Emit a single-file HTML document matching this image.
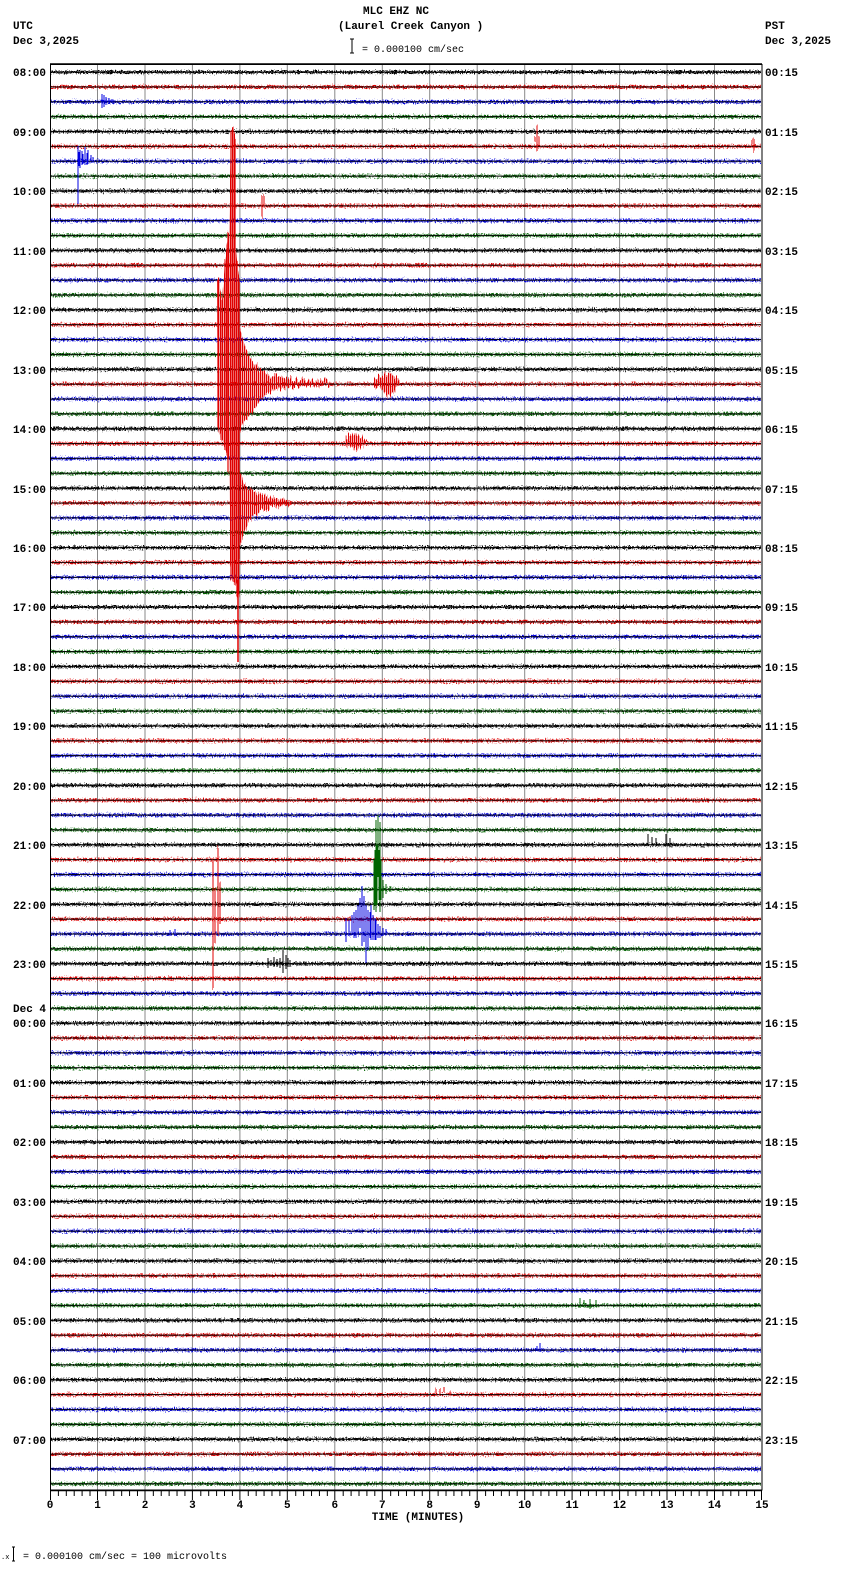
<!DOCTYPE html>
<html><head><meta charset="utf-8"><style>
html,body{margin:0;padding:0;background:#fff;}
body{width:850px;height:1584px;overflow:hidden;}
svg{display:block;}
text{font-family:"Liberation Mono","DejaVu Sans Mono",monospace;font-size:11px;font-weight:bold;fill:#000;}
.s{font-size:10px;font-weight:normal;}
</style></head><body>
<svg width="850" height="1584" viewBox="0 0 850 1584" xmlns="http://www.w3.org/2000/svg">
<defs>
<pattern id="tr" patternUnits="userSpaceOnUse" x="0" y="71" width="20" height="59.44">
<rect x="0" y="0" width="20" height="2.2" fill="#000"/>
<rect x="0" y="14.86" width="20" height="2.2" fill="#e00000"/>
<rect x="0" y="29.72" width="20" height="2.2" fill="#0000e0"/>
<rect x="0" y="44.58" width="20" height="2.2" fill="#006400"/>
</pattern>
<pattern id="bl" patternUnits="userSpaceOnUse" x="0" y="71" width="20" height="14.86">
<rect x="0" y="0.6" width="20" height="1" fill="#000"/>
</pattern>
<pattern id="rs" patternUnits="userSpaceOnUse" x="0" y="0" width="2" height="10">
<rect x="0" y="0" width="1.3" height="10" fill="#e00000"/>
</pattern>
<filter id="nz" x="0" y="0" width="1" height="1">
<feTurbulence type="fractalNoise" baseFrequency="0.9 0.6" numOctaves="2" seed="3" result="t"/>
<feColorMatrix in="t" type="matrix" values="0 0 0 0 0.5  0 1 0 0 0  0 0 0 0 0  0 0 0 0 1" result="m"/>
<feDisplacementMap in="SourceGraphic" in2="m" scale="7" xChannelSelector="R" yChannelSelector="G"/>
</filter>
<filter id="nz2" x="-0.1" y="-0.1" width="1.2" height="1.2">
<feTurbulence type="fractalNoise" baseFrequency="0.6 0.02" numOctaves="2" seed="7" result="t"/>
<feColorMatrix in="t" type="matrix" values="0 0 0 0 0.5  0 1 0 0 0  0 0 0 0 0  0 0 0 0 1" result="m"/>
<feDisplacementMap in="SourceGraphic" in2="m" scale="14" xChannelSelector="R" yChannelSelector="G"/>
</filter>
</defs>

<!-- header -->
<text x="363" y="14">MLC EHZ NC</text>
<text x="338" y="29">(Laurel Creek Canyon )</text>
<text x="13" y="29">UTC</text>
<text x="13" y="44">Dec 3,2025</text>
<text x="765" y="29">PST</text>
<text x="765" y="44">Dec 3,2025</text>
<path d="M350 39h4M352 39v14M350 53h4" stroke="#000" stroke-width="1" fill="none"/>
<text class="s" x="362" y="52">= 0.000100 cm/sec</text>

<!-- grid -->
<g stroke="#888" stroke-width="1">
<path d="M97.5 65V1490M145 65V1490M192.4 65V1490M239.9 65V1490M287.3 65V1490M334.8 65V1490M382.3 65V1490M429.7 65V1490M477.2 65V1490M524.7 65V1490M572.1 65V1490M619.6 65V1490M667 65V1490M714.5 65V1490"/>
</g>
<rect x="50.5" y="64.5" width="711.5" height="1425.5" fill="none" stroke="#000" stroke-width="1"/>
<path d="M50 64H762" stroke="#000" stroke-width="1.5"/>

<!-- traces -->
<g filter="url(#nz)">
<rect x="51" y="66" width="710" height="1423" fill="url(#tr)"/>
</g>
<rect x="51" y="66" width="710" height="1423" fill="url(#bl)"/>

<!-- events -->
<g fill="none" stroke="#0000e0" stroke-width="1">
<path d="M101 101h14M102 94v14M104 95v12M106 97v8M109 98v6M112 99v3"/>
<path d="M78 146v58M80 150v18M82 151v14M85 147v18M88 150v14M91 155v6M79 152v14M83 154v10M87 153v12M93 157v5"/>
<path d="M346 918v24M349 920v16M352 915v20M354 912v26M356 910v28M358 905v30M360 898v30M362 886v60M364 896v46M366 905v58M368 910v40M370 912v26M371 905v35M373 915v25M375 918v22M376 920v20M378 924v14M380 926v12M383 928v8M386 929v6M170 930v6M175 929v7"/>
<path d="M540 1343v9M537 1346v5"/>
</g>
<g filter="url(#nz2)">
<g fill="#e00000" stroke="#e00000" stroke-width="1">
<path d="M537 123v28M535 135v6M539 134v10M754 136v14M752 140v6M262 194v24M264 198v12" fill="none"/>
<polygon points="231,130 235,130 236,250 238,270 240,280 240,600 236,582 233,582 230,560 229,460 222,440 218,430 217,280 219,280 222,300 225,260 229,230" fill="url(#rs)" stroke="none"/>
<path d="M231 130V580M233 130V582M235 135V585M237 260V600M239 280V560M218 280V430M221 300V440M225 260V450M228 230V470" fill="none" stroke-width="1.2"/>
<polygon points="240,330 246,350 252,360 258,368 264,372 272,376 282,378 300,380 330,381 330,385 300,386 282,389 270,392 262,398 254,410 246,420 240,430" fill="url(#rs)" stroke="none"/>
<polygon points="240,470 244,484 252,490 260,494 270,497 290,500 292,505 270,507 258,512 250,520 244,535 240,545" fill="url(#rs)" stroke="none"/>
<polygon points="374,377 385,375 392,373 400,380 398,386 392,393 388,398 380,386 374,388" fill="url(#rs)" stroke="none"/>
<polygon points="345,437 356,433 362,438 368,441 362,446 356,450 350,446 345,444" fill="url(#rs)" stroke="none"/>
<path d="M213 860v84M215 888v54M218 845v88M220 882v40M213 920v70" fill="none"/>
<path d="M436 1390v6M440 1389v7M444 1390v5M450 1390v4" fill="none"/>
</g>
</g>
<path d="M238 580V662" stroke="#e00000" stroke-width="1.5"/>
<g fill="none" stroke="#006400" stroke-width="1">
<path d="M376 820v92M378 815v62M380 822v90M374 860v50M375 850v55M377 845v60M379 850v50M381 860v40M383 880v18M386 884v10M390 886v6"/>
<path d="M580 1298v10M584 1300v7M590 1299v10M596 1300v6"/>
</g>
<g fill="none" stroke="#000" stroke-width="1">
<path d="M268 958v10M271 960v6M274 957v10M277 959v8M280 958v10M283 950v23M286 955v14M288 958v9M290 960v7M296 961v4"/>
<path d="M648 834v12M652 837v8M656 838v5M666 834v12M670 838v6"/>
</g>

<!-- left labels -->
<g>
<text x="13" y="76">08:00</text>
<text x="13" y="136">09:00</text>
<text x="13" y="195">10:00</text>
<text x="13" y="255">11:00</text>
<text x="13" y="314">12:00</text>
<text x="13" y="374">13:00</text>
<text x="13" y="433">14:00</text>
<text x="13" y="493">15:00</text>
<text x="13" y="552">16:00</text>
<text x="13" y="611">17:00</text>
<text x="13" y="671">18:00</text>
<text x="13" y="730">19:00</text>
<text x="13" y="790">20:00</text>
<text x="13" y="849">21:00</text>
<text x="13" y="909">22:00</text>
<text x="13" y="968">23:00</text>
<text x="13" y="1012">Dec 4</text>
<text x="13" y="1027">00:00</text>
<text x="13" y="1087">01:00</text>
<text x="13" y="1146">02:00</text>
<text x="13" y="1206">03:00</text>
<text x="13" y="1265">04:00</text>
<text x="13" y="1325">05:00</text>
<text x="13" y="1384">06:00</text>
<text x="13" y="1444">07:00</text>
</g>
<g>
<text x="765" y="76">00:15</text>
<text x="765" y="136">01:15</text>
<text x="765" y="195">02:15</text>
<text x="765" y="255">03:15</text>
<text x="765" y="314">04:15</text>
<text x="765" y="374">05:15</text>
<text x="765" y="433">06:15</text>
<text x="765" y="493">07:15</text>
<text x="765" y="552">08:15</text>
<text x="765" y="611">09:15</text>
<text x="765" y="671">10:15</text>
<text x="765" y="730">11:15</text>
<text x="765" y="790">12:15</text>
<text x="765" y="849">13:15</text>
<text x="765" y="909">14:15</text>
<text x="765" y="968">15:15</text>
<text x="765" y="1027">16:15</text>
<text x="765" y="1087">17:15</text>
<text x="765" y="1146">18:15</text>
<text x="765" y="1206">19:15</text>
<text x="765" y="1265">20:15</text>
<text x="765" y="1325">21:15</text>
<text x="765" y="1384">22:15</text>
<text x="765" y="1444">23:15</text>
</g>

<!-- axis -->
<path d="M50 1490.5H762" stroke="#000" stroke-width="1.5"/>
<path d="M50.5 1490v10M97.5 1490v10M145 1490v10M192.4 1490v10M239.9 1490v10M287.3 1490v10M334.8 1490v10M382.3 1490v10M429.7 1490v10M477.2 1490v10M524.7 1490v10M572.1 1490v10M619.6 1490v10M667 1490v10M714.5 1490v10M761.5 1490v10" stroke="#000" stroke-width="1"/>
<g stroke="#000" stroke-width="1">
<path id="mt" d="M58.4 1490v6M66.3 1490v6M74.2 1490v6M82.1 1490v6M90 1490v6"/>
<use href="#mt" x="47.47"/><use href="#mt" x="94.93"/><use href="#mt" x="142.4"/><use href="#mt" x="189.87"/><use href="#mt" x="237.33"/><use href="#mt" x="284.8"/><use href="#mt" x="332.27"/><use href="#mt" x="379.73"/><use href="#mt" x="427.2"/><use href="#mt" x="474.67"/><use href="#mt" x="522.13"/><use href="#mt" x="569.6"/><use href="#mt" x="617.07"/><use href="#mt" x="664.53"/>
</g>
<g text-anchor="middle">
<text x="50" y="1508">0</text><text x="97.5" y="1508">1</text><text x="145" y="1508">2</text><text x="192.4" y="1508">3</text><text x="239.9" y="1508">4</text><text x="287.3" y="1508">5</text><text x="334.8" y="1508">6</text><text x="382.3" y="1508">7</text><text x="429.7" y="1508">8</text><text x="477.2" y="1508">9</text><text x="524.7" y="1508">10</text><text x="572.1" y="1508">11</text><text x="619.6" y="1508">12</text><text x="667" y="1508">13</text><text x="714.5" y="1508">14</text><text x="762" y="1508">15</text>
<text x="418" y="1520">TIME (MINUTES)</text>
</g>

<!-- footer -->
<text class="s" x="1" y="1559" style="font-size:7px">.x</text>
<path d="M12 1547h3M13.5 1547v14M12 1561h3" stroke="#000" stroke-width="1" fill="none"/>
<text class="s" x="23" y="1559">= 0.000100 cm/sec =     100 microvolts</text>
</svg>
</body></html>
